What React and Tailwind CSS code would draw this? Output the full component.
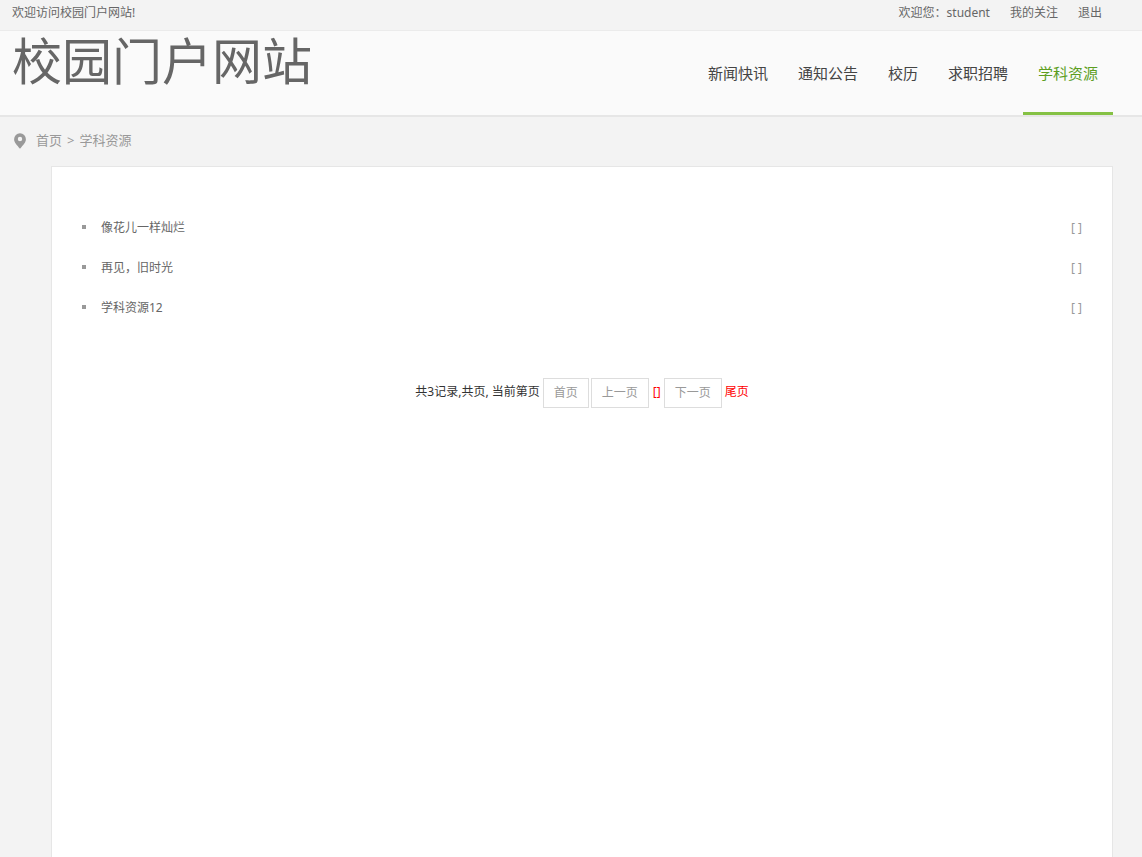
import React from 'react';

const navItems = ['新闻快讯', '通知公告', '校历', '求职招聘', '学科资源'];

const resources = ['像花儿一样灿烂', '再见，旧时光', '学科资源12'];

const LocationIcon = () => (
  <svg className="w-3 h-4" viewBox="0 0 12 16" aria-hidden="true">
    <path
      fill="#999"
      fillRule="evenodd"
      d="M6 0.3a5.9 5.9 0 0 0-5.9 5.9c0 3.2 2.7 5.6 5.9 9.6 3.2-4 5.9-6.4 5.9-9.6A5.9 5.9 0 0 0 6 0.3zM6 3.8a2.2 2.2 0 1 1 0 4.4 2.2 2.2 0 0 1 0-4.4z"
    />
  </svg>
);

const TopBar = () => (
  <div className="flex justify-between h-[31px] pl-3 pr-10 border-b border-[#ebebeb] leading-[26px] text-[#666]">
    <p>欢迎访问校园门户网站!</p>
    <div className="flex gap-5">
      <a href="#user">欢迎您：student</a>
      <a href="#follow">我的关注</a>
      <a href="#logout">退出</a>
    </div>
  </div>
);

const Header = ({ active }) => (
  <header className="flex justify-between h-[86px] pl-3 pr-[29px] bg-[#fafafa] border-b-2 border-[#e6e6e6]">
    <h1 className="text-[50px] leading-[60px] text-[#666] whitespace-nowrap">校园门户网站</h1>
    <nav className="flex text-[15px] leading-[84px]">
      {navItems.map((item) => (
        <a
          key={item}
          href="#nav"
          className={`px-[15px] h-[84px] whitespace-nowrap ${
            item === active ? 'text-[#5c9e1f] border-b-3 border-[#85c144]' : 'text-[#444]'
          }`}
        >
          {item}
        </a>
      ))}
    </nav>
  </header>
);

const Breadcrumb = () => (
  <div className="flex items-center gap-[10px] h-[49px] pl-[14px] pb-[2px] text-[13px] text-[#999]">
    <LocationIcon />
    <p className="flex gap-[5px]">
      <a href="#home">首页</a>
      <span>&gt;</span>
      <a href="#resources">学科资源</a>
    </p>
  </div>
);

const ResourceList = () => (
  <ul className="leading-[42px]">
    {resources.map((title) => (
      <li key={title} className="flex h-10">
        <span className="self-center w-1 h-1 mr-[15px] bg-[#999]"></span>
        <a href="#detail" className="flex-1 text-[#666]">{title}</a>
        <span className="text-[#999]">[ ]</span>
      </li>
    ))}
  </ul>
);

const PageButton = ({ children }) => (
  <button type="button" className="h-[30px] px-[10px] border border-[#ddd] text-[#999]">
    {children}
  </button>
);

const Pagination = () => (
  <div className="flex justify-center mt-[51px] leading-7 text-[#333]">
    <span className="mr-[3px]">共3记录,共页, 当前第页</span>
    <div className="flex gap-[2px]">
      <PageButton>首页</PageButton>
      <PageButton>上一页</PageButton>
      <span className="pl-[2px] pr-px text-[#f00]">[]</span>
      <PageButton>下一页</PageButton>
    </div>
    <a href="#last" className="ml-[3px] text-[#f00]">尾页</a>
  </div>
);

const App = () => {
  return (
    <div className="flex flex-col min-h-screen bg-[#f3f3f3] text-[12px] font-['Noto_Sans','Noto_Sans_CJK_SC',sans-serif]">
      <TopBar />
      <Header active="学科资源" />
      <Breadcrumb />
      <main className="flex-1 ml-[51px] mr-[29px] px-[30px] py-10 bg-white border border-b-0 border-[#e6e6e6]">
        <ResourceList />
        <Pagination />
      </main>
    </div>
  );
};

export default App;
